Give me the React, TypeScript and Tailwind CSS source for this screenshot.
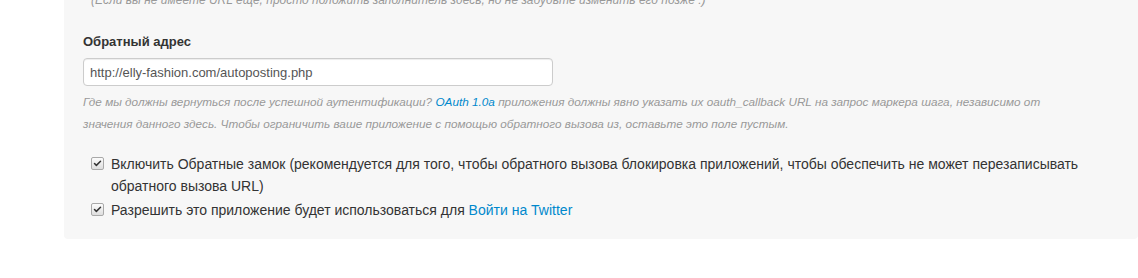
import { Check } from "lucide-react";

function FakeCheckbox() {
  return (
    <span className="mt-[4px] flex h-[13px] w-[13px] shrink-0 items-center justify-center rounded-[2px] border border-[#a9a9a9] bg-gradient-to-b from-[#fcfcfc] to-[#dedede]">
      <Check className="h-[9px] w-[9px] text-[#333]" strokeWidth={4} />
    </span>
  );
}

export default function App() {
  return (
    <div className="h-[278px] overflow-hidden bg-white font-['Liberation_Sans',Arial,sans-serif]">
      <div className="ml-[64px] rounded-b-[4px] bg-[#f7f7f7] pl-[19px] pb-[18px]">
        <div className="w-[1000px]">
          <p className="-mt-[10px] ml-[8px] text-[12px] italic leading-[20px] text-[#999]">
            (Если вы не имеете URL еще, просто положить заполнитель здесь, но не забудьте изменить его позже :)
          </p>

          <label className="mt-[22px] block text-[13px] font-bold leading-[20px] text-[#333]">
            Обратный адрес
          </label>
          <input
            type="text"
            readOnly
            value="http://elly-fashion.com/autoposting.php"
            className="mt-[6px] block h-[28px] w-[470px] rounded-[4px] border border-[#ccc] bg-white px-[6px] text-[13px] text-[#555] shadow-[inset_0_1px_1px_rgba(0,0,0,0.075)] outline-none"
          />
          <p className="mt-[5px] text-[11.75px] italic leading-[22px] text-[#999]">
            Где мы должны вернуться после успешной аутентификации?{" "}
            <a className="text-[#0088cc]">OAuth 1.0a</a> приложения должны явно
            указать их oauth_callback URL на запрос маркера шага, независимо от
            значения данного здесь. Чтобы ограничить ваше приложение с помощью
            обратного вызова из, оставьте это поле пустым.
          </p>

          <div className="mt-[18px] flex flex-col gap-[2px] text-[14px] leading-[22px] text-[#333]">
            <label className="flex gap-[7px] pl-[8px]">
              <FakeCheckbox />
              <span>
                Включить Обратные замок (рекомендуется для того, чтобы обратного
                вызова блокировка приложений, чтобы обеспечить не может
                перезаписывать обратного вызова URL)
              </span>
            </label>
            <label className="flex gap-[7px] pl-[8px]">
              <FakeCheckbox />
              <span>
                Разрешить это приложение будет использоваться для{" "}
                <a className="text-[#0088cc]">Войти на Twitter</a>
              </span>
            </label>
          </div>
        </div>
      </div>
    </div>
  );
}
